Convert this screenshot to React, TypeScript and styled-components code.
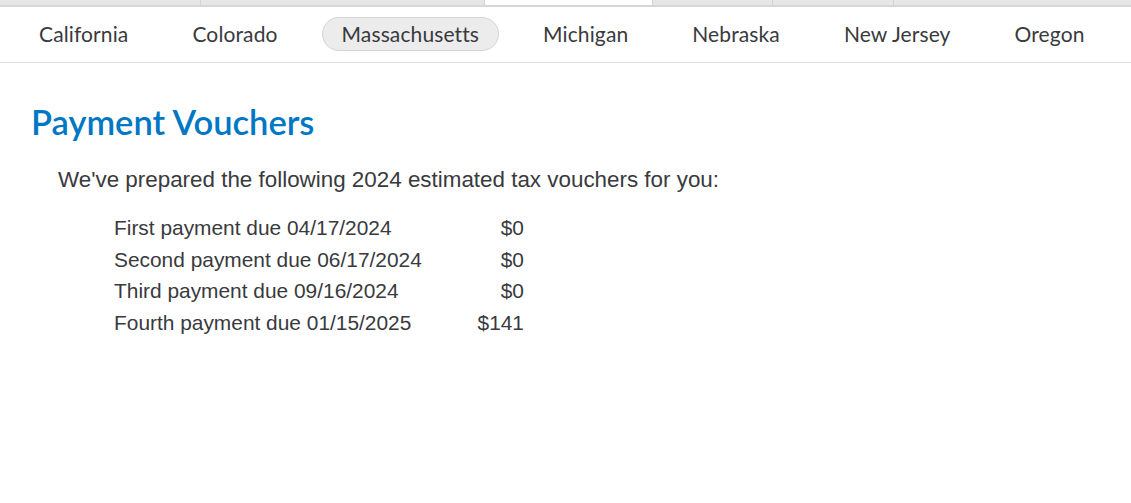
import React from "react";
import styled, { createGlobalStyle } from "styled-components";

const GlobalStyle = createGlobalStyle`
  html, body {
    margin: 0;
    background: #fff;
  }
`;

const tabs = [
  { width: 200 },
  { width: 284 },
  { width: 168, active: true },
  { width: 120 },
  { width: 121 },
  { width: 238 },
];

const states = [
  "California",
  "Colorado",
  "Massachusetts",
  "Michigan",
  "Nebraska",
  "New Jersey",
  "Oregon",
];

const payments = [
  { label: "First payment due 04/17/2024", amount: "$0" },
  { label: "Second payment due 06/17/2024", amount: "$0" },
  { label: "Third payment due 09/16/2024", amount: "$0" },
  { label: "Fourth payment due 01/15/2025", amount: "$141" },
];

export default function App() {
  return (
    <Page>
      <GlobalStyle />
      <TabStrip>
        {tabs.map((t, i) => (
          <Tab key={i} $width={t.width} $active={!!t.active} />
        ))}
      </TabStrip>
      <StateNav>
        {states.map((s) => (
          <StateItem key={s} $active={s === "Massachusetts"}>
            {s}
          </StateItem>
        ))}
      </StateNav>
      <Content>
        <Title>Payment Vouchers</Title>
        <Intro>
          We've prepared the following 2024 estimated tax vouchers for you:
        </Intro>
        <VoucherTable>
          {payments.map((p) => (
            <React.Fragment key={p.label}>
              <DueLabel>{p.label}</DueLabel>
              <Amount>{p.amount}</Amount>
            </React.Fragment>
          ))}
        </VoucherTable>
      </Content>
    </Page>
  );
}

const Page = styled.div`
  width: 1131px;
  min-height: 503px;
  background: #fff;
`;

const TabStrip = styled.div`
  display: flex;
  height: 5px;
  border-bottom: 2px solid #d6d6d6;
`;

const Tab = styled.div<{ $width: number; $active: boolean }>`
  width: ${(p) => p.$width}px;
  height: 100%;
  background: ${(p) => (p.$active ? "#ffffff" : "#e6e6e6")};
  border-left: 1px solid #d2d2d2;
  box-sizing: border-box;
  &:first-child {
    border-left: none;
  }
`;

const StateNav = styled.nav`
  display: flex;
  align-items: center;
  gap: 24px;
  box-sizing: border-box;
  height: 56px;
  padding: 0 0 2px 19px;
  border-bottom: 1px solid #dcdcdc;
  font-family: Lato, "Noto Sans", sans-serif;
`;

const StateItem = styled.div<{ $active: boolean }>`
  padding: 0 19px;
  height: 34px;
  display: flex;
  align-items: center;
  box-sizing: border-box;
  border-radius: 17px;
  font-size: 21px;
  letter-spacing: 0.12px;
  color: #393a3d;
  background: ${(p) => (p.$active ? "#ececec" : "transparent")};
  border: 1px solid ${(p) => (p.$active ? "#d4d4d4" : "transparent")};
`;

const Content = styled.section`
  padding: 38px 31px;
`;

const Title = styled.h1`
  margin: 0;
  font-family: Lato, "Noto Sans", sans-serif;
  font-size: 34.5px;
  font-weight: 600;
  color: #0077c5;
  line-height: 42px;
`;

const Intro = styled.p`
  margin: 24px 0 0 27px;
  font-family: "Liberation Sans", Arial, sans-serif;
  font-size: 22.4px;
  color: #393a3d;
  line-height: 26px;
`;

const VoucherTable = styled.div`
  display: grid;
  grid-template-columns: 340px 70px;
  margin: 19px 0 0 83px;
  font-family: "Liberation Sans", Arial, sans-serif;
  font-size: 20.9px;
  color: #393a3d;
  line-height: 31.7px;
`;

const DueLabel = styled.div``;

const Amount = styled.div`
  text-align: right;
`;
